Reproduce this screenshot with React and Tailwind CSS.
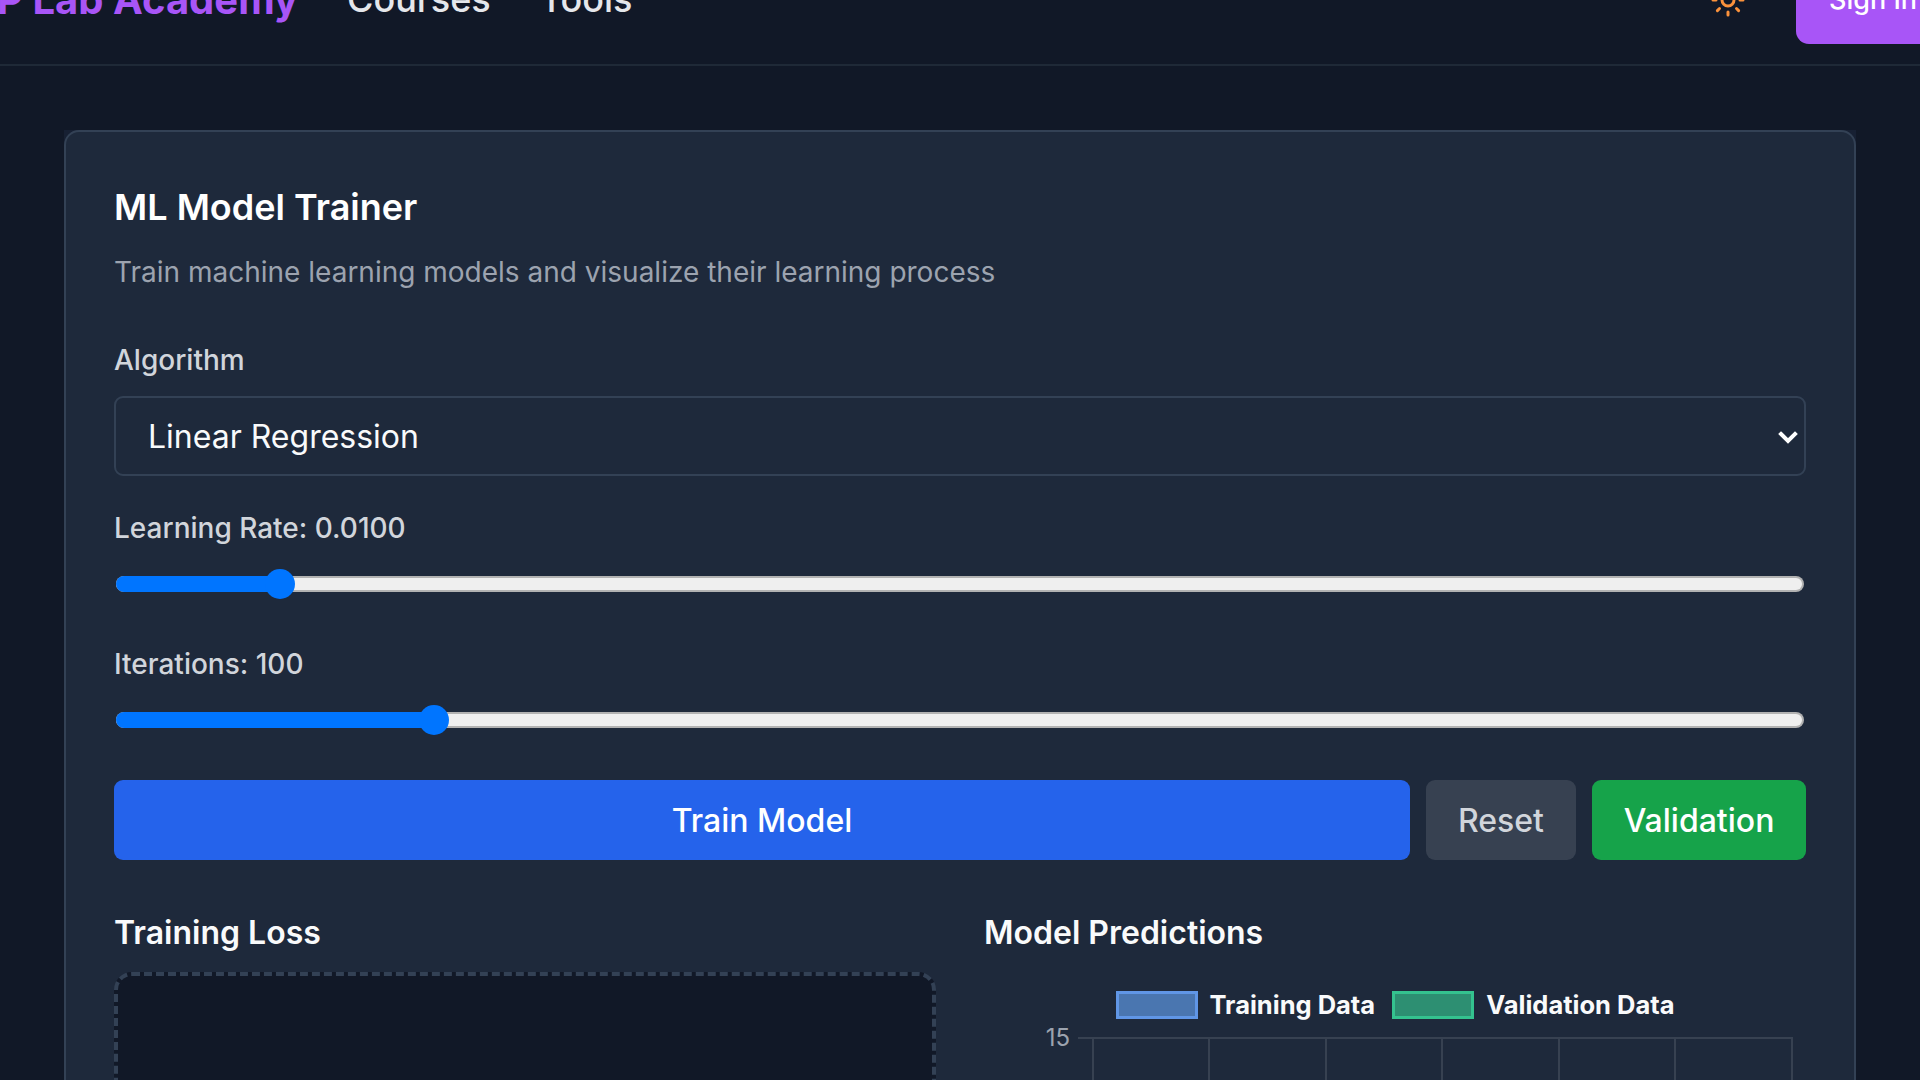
import { Sun } from 'lucide-react';

function Slider({ pct }) {
  return (
    <div className="relative mx-[2px] mt-[25px] h-[30px] flex items-center">
      <div className="w-full h-4 rounded-full bg-[#efefef] border-y-2 border-r-2 border-[#b2b2b2]"></div>
      <div
        className="absolute left-0 h-4 rounded-l-full bg-[#0075ff]"
        style={{ width: `calc(${pct / 100} * (100% - 30px) + 15px)` }}
      ></div>
      <div
        className="absolute w-[30px] h-[30px] rounded-full bg-[#0075ff]"
        style={{ left: `calc(${pct / 100} * (100% - 30px))` }}
      ></div>
    </div>
  );
}

function LegendItem({ label, boxClass }) {
  return (
    <div className="flex items-center gap-[12px]">
      <div className={`w-[82px] h-7 border-[3px] ${boxClass}`}></div>
      <span className="text-[25.5px] leading-7 font-bold text-[#f9fafb]">{label}</span>
    </div>
  );
}

const gridX = [1093, 1209, 1326, 1442, 1559, 1675, 1792];

export default function App() {
  return (
    <div className="w-[1920px] h-[1080px] overflow-hidden bg-[#111827] font-[Inter,sans-serif]">
      <header className="-mt-16 h-[130px] border-b-2 border-[#1f2937] flex items-center">
        <div className="-ml-[56px] -mr-[46px] flex-1 flex items-center">
          <span className="text-[40px] font-bold text-[#a855f7]">NLP Lab Academy</span>
          <nav className="ml-[49px] -mt-[2px] flex items-center gap-[49px] text-[36px] font-medium text-[#e5e7eb]">
            <span>Courses</span>
            <span>Tools</span>
          </nav>
          <div className="ml-auto flex items-center gap-[50px]">
            <Sun size={36} className="text-[#fb923c]" />
            <button className="w-[170px] h-[88px] pl-[33px] text-left rounded-[13px] bg-[#a855f7] text-[27px] font-medium text-white">
              Sign In
            </button>
          </div>
        </div>
      </header>

      <main className="px-16 pt-16">
        <div className="bg-[#172033]">
          <section className="bg-[#1e293b] border-2 border-[#334155] rounded-[15px] p-12 h-[1200px]">
            <h1 className="text-[36px] leading-[54px] font-semibold text-white">ML Model Trainer</h1>
            <p className="mt-[18px] text-[28px] leading-10 text-[#9ca3af]">
              Train machine learning models and visualize their learning process
            </p>

            <label className="block mt-[52px] text-[28px] leading-8 font-medium text-[#d1d5db]">Algorithm</label>
            <div className="mt-5 h-20 pl-[32px] pr-[4px] pt-[1px] flex items-center justify-between border-2 border-[#334155] rounded-[9px] text-[32px] text-[#f9fafb]">
              <span>Linear Regression</span>
              <svg width="24" height="24" viewBox="0 0 24 24" fill="none" stroke="white" strokeWidth="4" strokeLinecap="square">
                <path d="M5 9l7 7 7-7" />
              </svg>
            </div>

            <label className="block mt-[36px] text-[28px] leading-8 font-medium text-[#d1d5db]">Learning Rate: 0.0100</label>
            <Slider pct={9} />

            <label className="block mt-[49px] text-[28px] leading-8 font-medium text-[#d1d5db]">Iterations: 100</label>
            <Slider pct={18.3} />

            <div className="mt-[45px] flex gap-4 text-[32px] font-medium">
              <button className="flex-1 h-20 pt-[1px] rounded-[9px] bg-[#2563eb] text-white">Train Model</button>
              <button className="w-[150px] h-20 pt-[1px] rounded-[9px] bg-[#374151] text-[#d1d5db]">Reset</button>
              <button className="w-[214px] h-20 pt-[1px] rounded-[9px] bg-[#16a34a] text-white">Validation</button>
            </div>

            <div className="mt-[53px] grid grid-cols-2 gap-12">
              <div>
                <h2 className="text-[32px] leading-10 font-semibold text-[#f9fafb]">Training Loss</h2>
                <div className="mt-[19px] h-[400px] bg-[#111827] border-[4px] border-dashed border-[#334155] rounded-[18px]"></div>
              </div>
              <div>
                <h2 className="text-[32px] leading-10 font-semibold text-[#f9fafb]">Model Predictions</h2>
                <div className="mt-[38px] flex justify-center gap-[17px]">
                  <LegendItem label="Training Data" boxClass="bg-[#4a76b0] border-[#6096e6]" />
                  <LegendItem label="Validation Data" boxClass="bg-[#2d8f72] border-[#34c28f]" />
                </div>
                <svg width="822" height="200" className="mt-[18px] block overflow-visible" viewBox="984 1037 822 200">
                  <text x="1070" y="1046" textAnchor="end" fontSize="24" fill="#9ca3af">15</text>
                  <line x1="1078" x2="1793" y1="1038" y2="1038" stroke="#374151" strokeWidth="2" />
                  {gridX.map((x) => (
                    <line key={x} x1={x} x2={x} y1="1038" y2="1237" stroke="#374151" strokeWidth="2" />
                  ))}
                </svg>
              </div>
            </div>
          </section>
        </div>
      </main>
    </div>
  );
}
